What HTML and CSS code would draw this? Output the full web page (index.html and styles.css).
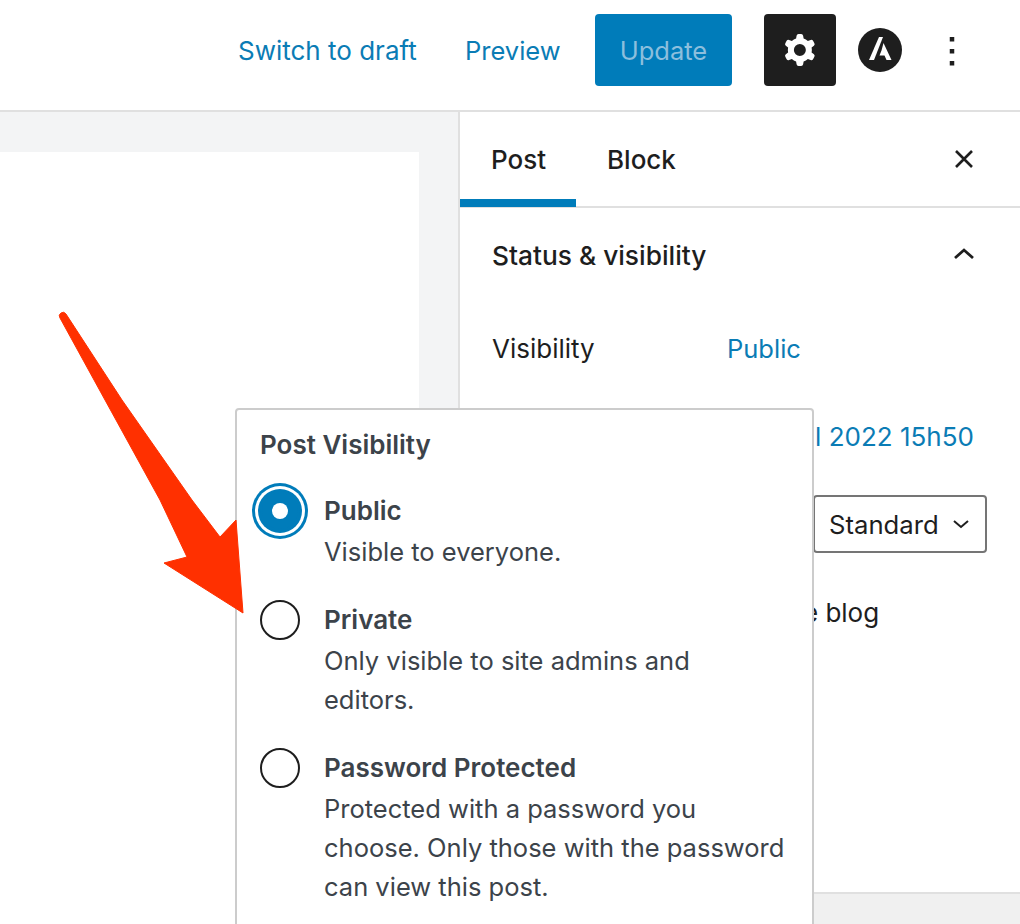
FILE: index.html
```html
<!DOCTYPE html>
<html lang="en">
<head>
    <meta charset="UTF-8">
    <meta name="viewport" content="width=device-width, initial-scale=1.0">
    <title>Edit Post</title>
    <link rel="stylesheet" href="styles.css">
</head>
<body>
    <header class="topbar">
        <a class="link switch-draft">Switch to draft</a>
        <a class="link preview">Preview</a>
        <button class="update-btn">Update</button>
        <button class="settings-btn" aria-label="Settings">
            <svg width="48" height="48" viewBox="0 0 24 24"><path fill="#fff" fill-rule="evenodd" d="M10.289 4.836A1 1 0 0111.275 4h1.306a1 1 0 01.987.836l.244 1.466c.787.26 1.503.679 2.108 1.218l1.393-.522a1 1 0 011.216.437l.653 1.13a1 1 0 01-.23 1.273l-1.148.944a6.025 6.025 0 010 2.435l1.149.946a1 1 0 01.23 1.272l-.653 1.13a1 1 0 01-1.216.437l-1.394-.522c-.605.54-1.32.958-2.108 1.218l-.244 1.466a1 1 0 01-.987.836h-1.306a1 1 0 01-.986-.836l-.244-1.466a5.995 5.995 0 01-2.108-1.218l-1.394.522a1 1 0 01-1.217-.436l-.653-1.131a1 1 0 01.23-1.272l1.149-.946a6.026 6.026 0 010-2.435l-1.148-.944a1 1 0 01-.23-1.272l.653-1.131a1 1 0 011.217-.437l1.393.522a5.994 5.994 0 012.108-1.218l.244-1.466zM14.929 12a3 3 0 11-6 0 3 3 0 016 0z"/></svg>
        </button>
        <svg class="avatar" width="44" height="44" viewBox="0 0 44 44">
            <circle cx="22" cy="22" r="22" fill="#1e1e1e"/>
            <path fill="#fff" d="M21 9h4l-9 23h-5z"/>
            <path fill="#fff" d="M25.500 15l8 17h-5l-2-4.500h-5l2-5z"/>
        </svg>
        <svg class="dots" width="8" height="32" viewBox="0 0 8 32">
            <rect x="1.750" y="1" width="4.500" height="4.500" fill="#1e1e1e"/>
            <rect x="1.750" y="13" width="4.500" height="4.500" fill="#1e1e1e"/>
            <rect x="1.750" y="25" width="4.500" height="4.500" fill="#1e1e1e"/>
        </svg>
    </header>

    <div class="main">
        <div class="editor">
            <div class="canvas"></div>
        </div>

        <aside class="sidebar">
            <div class="tabs">
                <div class="tab active">Post</div>
                <div class="tab">Block</div>
                <svg class="close" width="24" height="24" viewBox="0 0 24 24"><path d="M4 4l16 16M20 4L4 20" stroke="#1e1e1e" stroke-width="2.600" fill="none"/></svg>
            </div>
            <div class="panel">
                <div class="panel-title">
                    <span>Status &amp; visibility</span>
                    <svg class="chevron" width="24" height="16" viewBox="0 0 24 16"><path d="M3 12l9-8 9 8" stroke="#1e1e1e" stroke-width="2.800" fill="none"/></svg>
                </div>
                <div class="row">
                    <span class="row-label">Visibility</span>
                    <a class="link public-link">Public</a>
                </div>
                <div class="row">
                    <span class="row-label">Publish</span>
                    <a class="link publish-date">12 avril 2022 15h50</a>
                </div>
                <div class="row format-row">
                    <span>Post Format</span>
                    <div class="select">
                        <span>Standard</span>
                        <svg width="18" height="12" viewBox="0 0 18 12"><path d="M2 3l7 6 7-6" stroke="#1e1e1e" stroke-width="2" fill="none"/></svg>
                    </div>
                </div>
                <div class="row stick-row">Stick to the top of the blog</div>
            </div>
            <div class="sidebar-foot"></div>
        </aside>
    </div>

    <!-- popover + annotation arrow -->
    <div class="popover">
        <h2 class="popover-title">Post Visibility</h2>
        <div class="option">
            <span class="radio checked"></span>
            <div class="option-text">
                <div class="option-name">Public</div>
                <div class="option-desc">Visible to everyone.</div>
            </div>
        </div>
        <div class="option">
            <span class="radio"></span>
            <div class="option-text">
                <div class="option-name">Private</div>
                <div class="option-desc">Only visible to site admins and editors.</div>
            </div>
        </div>
        <div class="option">
            <span class="radio"></span>
            <div class="option-text">
                <div class="option-name">Password Protected</div>
                <div class="option-desc">Protected with a password you choose. Only those with the password can view this post.</div>
            </div>
        </div>
    </div>

    <svg class="arrow" width="200" height="320" viewBox="55 305 200 320">
        <path fill="#ff3000" stroke="#ff3000" stroke-width="1" stroke-linejoin="round" d="M60 318a3.500 3.500 0 0 1 6-4L122 400 192 500 220 537l16-17 7 93-79-50 23-6L160 500 105 400z"/>
    </svg>
</body>
</html>
```

FILE: styles.css
```css
* {
    box-sizing: border-box;
}

body {
    margin: 0;
    height: 924px;
    overflow: hidden;
    position: relative;
    display: flex;
    flex-direction: column;
    font-family: Inter, "Liberation Sans", sans-serif;
    font-size: 25.5px;
    color: #1e1e1e;
    background-color: #fff;
}

.link {
    color: #0a7cb5;
}

.topbar {
    height: 112px;
    flex-shrink: 0;
    display: flex;
    align-items: center;
    padding: 0 0 10px 238px;
    border-bottom: 2px solid #e0e0e0;
}

.switch-draft {
    width: 227px;
    margin-top: 1px;
    font-size: 26px;
}

.preview {
    width: 130px;
    margin-top: 1px;
}

.update-btn {
    width: 137px;
    height: 72px;
    margin-right: 32px;
    border: none;
    border-radius: 4px;
    background-color: #007cba;
    color: #8cbfdd;
    font: inherit;
}

.settings-btn {
    width: 72px;
    height: 72px;
    margin-right: 22px;
    padding: 0;
    display: flex;
    align-items: center;
    justify-content: center;
    border: none;
    border-radius: 4px;
    background-color: #1e1e1e;
}

.dots {
    margin-left: 46px;
    margin-top: 3px;
}

.main {
    flex: 1;
    display: flex;
    min-height: 0;
}

.editor {
    width: 458px;
    padding: 40px 39px 0 0;
    background-color: #f3f4f5;
}

.canvas {
    height: 100%;
    background-color: #fff;
}

.sidebar {
    flex: 1;
    display: flex;
    flex-direction: column;
    border-left: 2px solid #e0e0e0;
    font-size: 26px;
}

.tabs {
    height: 96px;
    flex-shrink: 0;
    display: flex;
    border-bottom: 2px solid #e0e0e0;
}

.tab {
    padding: 0 31px;
    line-height: 96px;
    font-weight: 500;
}

.tab.active {
    width: 116px;
    height: 95px;
    border-bottom: 8px solid #007cba;
}

.close {
    margin: 35px 44px 0 auto;
}

.panel {
    flex: 1;
    padding: 0 32px;
}

.panel-title {
    height: 94px;
    margin-bottom: 26px;
    display: flex;
    align-items: center;
    justify-content: space-between;
    padding-right: 12px;
    font-size: 26.300px;
    font-weight: 500;
}

.chevron {
    margin-bottom: 2px;
}

.row {
    display: flex;
    align-items: center;
    height: 40px;
    margin-bottom: 48px;
    white-space: nowrap;
}

.row-label {
    width: 235px;
}

.public-link {
    font-size: 25.500px;
}

.publish-date {
    margin-left: 9px;
}

.format-row {
    height: 58px;
    margin-top: -9px;
    margin-bottom: 39px;
    justify-content: space-between;
}

.select {
    width: 174px;
    height: 58px;
    margin-right: 1px;
    display: flex;
    align-items: center;
    justify-content: space-between;
    padding: 0 15px 0 14px;
    border: 2px solid #757575;
    border-radius: 4px;
    font-size: 25.700px;
}

.stick-row {
    padding-left: 62px;
}

.sidebar-foot {
    height: 32px;
    flex-shrink: 0;
    background-color: #f0f0f0;
    border-top: 2px solid #e0e0e0;
}

.popover {
    position: absolute;
    left: 235px;
    top: 408px;
    width: 579px;
    height: 560px;
    padding: 15px 23px 0;
    background-color: #fff;
    border: 2px solid #ccc;
    border-radius: 4px;
    color: #3c434a;
}

.popover-title {
    margin: 0 0 25px;
    font-size: 26px;
    line-height: 40px;
    font-weight: 600;
}

.option {
    display: flex;
    gap: 24px;
    margin-bottom: 28px;
}

.option-text {
    width: 461px;
}

.option-name {
    font-size: 26px;
    line-height: 42px;
    font-weight: 600;
}

.option-desc {
    line-height: 39px;
}

.radio {
    width: 40px;
    height: 40px;
    flex-shrink: 0;
    margin-top: 1px;
    display: flex;
    align-items: center;
    justify-content: center;
    border: 2px solid #1e1e1e;
    border-radius: 50%;
    background-color: #fff;
}

.radio.checked {
    border-color: #007cba;
    background-color: #007cba;
    box-shadow: 0 0 0 2px #007cba, 0 0 0 5px #fff, 0 0 0 8px #007cba;
}

.radio.checked::after {
    content: "";
    width: 16px;
    height: 16px;
    border-radius: 50%;
    background-color: #fff;
}

.arrow {
    position: absolute;
    left: 55px;
    top: 305px;
}
```
